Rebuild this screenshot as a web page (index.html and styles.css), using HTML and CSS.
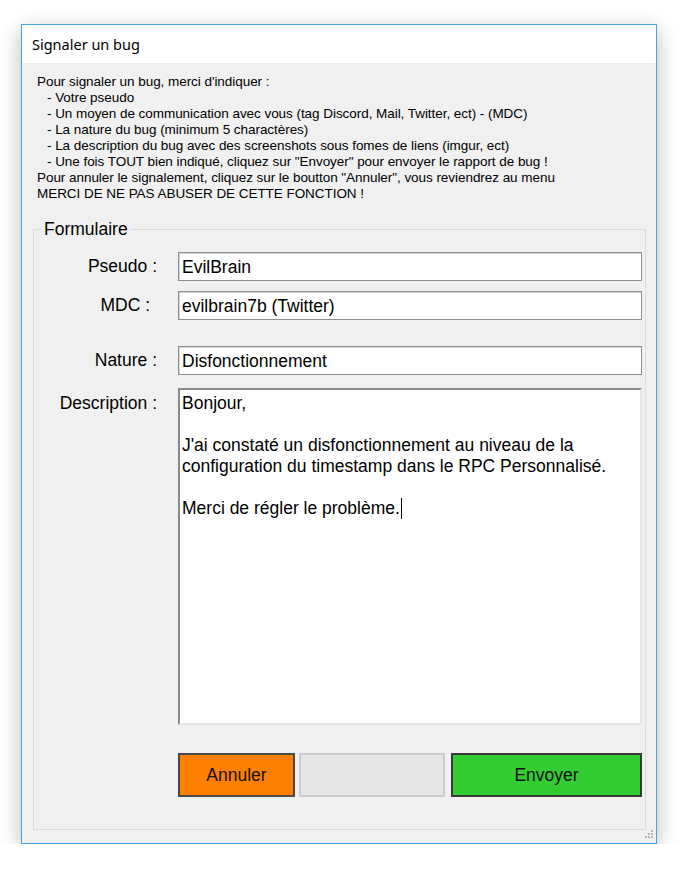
FILE: index.html
```html
<!DOCTYPE html>
<html lang="fr">
<head>
<meta charset="utf-8">
<title>Signaler un bug</title>
<link rel="stylesheet" href="styles.css">
</head>
<body>
<div class="window">
  <div class="titlebar"><span class="title">Signaler un bug</span></div>
  <div class="client">
    <div class="instructions">
      <div>Pour signaler un bug, merci d'indiquer :</div>
      <div class="ind">- Votre pseudo</div>
      <div class="ind">- Un moyen de communication avec vous (tag Discord, Mail, Twitter, ect) - (MDC)</div>
      <div class="ind">- La nature du bug (minimum 5 charactères)</div>
      <div class="ind">- La description du bug avec des screenshots sous fomes de liens (imgur, ect)</div>
      <div class="ind">- Une fois TOUT bien indiqué, cliquez sur "Envoyer" pour envoyer le rapport de bug !</div>
      <div>Pour annuler le signalement, cliquez sur le boutton "Annuler", vous reviendrez au menu</div>
      <div>MERCI DE NE PAS ABUSER DE CETTE FONCTION !</div>
    </div>
    <fieldset class="group">
      <legend class="legend">Formulaire</legend>
      <div class="row row-pseudo">
        <label class="lbl">Pseudo :</label>
        <div class="field">EvilBrain</div>
      </div>
      <div class="row row-mdc">
        <label class="lbl lbl-mdc">MDC :</label>
        <div class="field">evilbrain7b (Twitter)</div>
      </div>
      <div class="row row-nature">
        <label class="lbl">Nature :</label>
        <div class="field">Disfonctionnement</div>
      </div>
      <div class="row row-desc">
        <label class="lbl lbl-desc">Description :</label>
        <div class="area">
          <div>Bonjour,</div>
          <div class="blank">&nbsp;</div>
          <div>J'ai constaté un disfonctionnement au niveau de la</div>
          <div>configuration du timestamp dans le RPC Personnalisé.</div>
          <div class="blank">&nbsp;</div>
          <div>Merci de régler le problème.<span class="caret"></span></div>
        </div>
      </div>
      <div class="buttons">
        <div class="btn btn-cancel">Annuler</div>
        <div class="btn btn-blank"></div>
        <div class="btn btn-send">Envoyer</div>
      </div>
    </fieldset>
  </div>
  <svg class="grip" width="12" height="12" viewBox="0 0 12 12">
    <rect x="9" y="1" width="2" height="2" fill="#b4b4b4"/>
    <rect x="6" y="4" width="2" height="2" fill="#b4b4b4"/>
    <rect x="9" y="4" width="2" height="2" fill="#b4b4b4"/>
    <rect x="3" y="7" width="2" height="2" fill="#b4b4b4"/>
    <rect x="6" y="7" width="2" height="2" fill="#b4b4b4"/>
    <rect x="9" y="7" width="2" height="2" fill="#b4b4b4"/>
  </svg>
</div>
</body>
</html>
```
FILE: styles.css
```css
html, body {
  margin: 0;
  padding: 0;
  background: #ffffff;
}

.window {
  position: relative;
  box-sizing: border-box;
  width: 636px;
  height: 820px;
  margin: 24px 0 0 21px;
  border: 1px solid #45a3de;
  background: #f0f0f0;
  display: flex;
  flex-direction: column;
  box-shadow: 0 6px 20px rgba(0, 0, 0, 0.28);
}

.titlebar {
  height: 38px;
  background: #ffffff;
  display: flex;
  align-items: center;
  padding-left: 10px;
  flex: none;
}

.title {
  font-family: "Noto Sans", "Open Sans", sans-serif;
  font-size: 14.5px;
  color: #000000;
}

.client {
  flex: 1;
  display: flex;
  flex-direction: column;
  background: #f0f0f0;
}

.instructions {
  padding: 11px 0 0 15px;
  font-family: "Liberation Sans", Arial, sans-serif;
  font-size: 13.5px;
  letter-spacing: -0.05px;
  line-height: 16px;
  color: #000000;
}

.ind {
  padding-left: 10px;
}

.group {
  flex: 1;
  margin: 17px 10px 13px 11px;
  padding: 0 2px 0 0;
  border: 1px solid #dcdcdc;
  min-width: 0;
  font-family: "Liberation Sans", Arial, sans-serif;
  font-size: 17.5px;
  color: #000000;
}

.legend {
  margin-left: 8px;
  padding: 0 2px;
  line-height: 20px;
  color: #000000;
}

.row {
  display: flex;
  align-items: center;
}

.row-pseudo { margin-top: 13px; }
.row-mdc { margin-top: 10px; }
.row-nature { margin-top: 26px; }
.row-desc {
  margin-top: 13px;
  align-items: flex-start;
}

.lbl {
  box-sizing: border-box;
  width: 144px;
  padding-right: 21px;
  text-align: right;
  line-height: 21px;
  flex: none;
}

.lbl-mdc {
  padding-right: 28px;
}

.lbl-desc {
  padding-top: 5px;
}

.field {
  box-sizing: border-box;
  width: 464px;
  height: 29px;
  background: #ffffff;
  border: 1px solid #8e8e8e;
  box-shadow: inset 1px 1px 0 #d6d6d6;
  padding-left: 3px;
  line-height: 28px;
  white-space: nowrap;
  flex: none;
}

.area {
  box-sizing: border-box;
  width: 464px;
  height: 337px;
  background: #ffffff;
  border-style: solid;
  border-width: 2px;
  border-color: #8a8a8a #e6e6e6 #e6e6e6 #8a8a8a;
  padding: 3px 0 0 2px;
  line-height: 21px;
  flex: none;
}

.caret {
  display: inline-block;
  width: 0;
  height: 21px;
  border-left: 1px solid #000000;
  vertical-align: top;
  margin-left: 1px;
}

.buttons {
  display: flex;
  margin: 28px 0 0 144px;
  height: 44px;
}

.btn {
  box-sizing: border-box;
  height: 44px;
  display: flex;
  align-items: center;
  justify-content: center;
  font-size: 17.5px;
  color: #111111;
  flex: none;
}

.btn-cancel {
  width: 117px;
  background: #ff8000;
  border: 2px solid #4a4a4a;
}

.btn-blank {
  width: 146px;
  margin-left: 4px;
  background: #e5e5e5;
  border: 2px solid #cccccc;
}

.btn-send {
  width: 191px;
  margin-left: 6px;
  background: #33cc33;
  border: 2px solid #3a3a3a;
}

.grip {
  position: absolute;
  right: 2px;
  bottom: 2px;
}
```
